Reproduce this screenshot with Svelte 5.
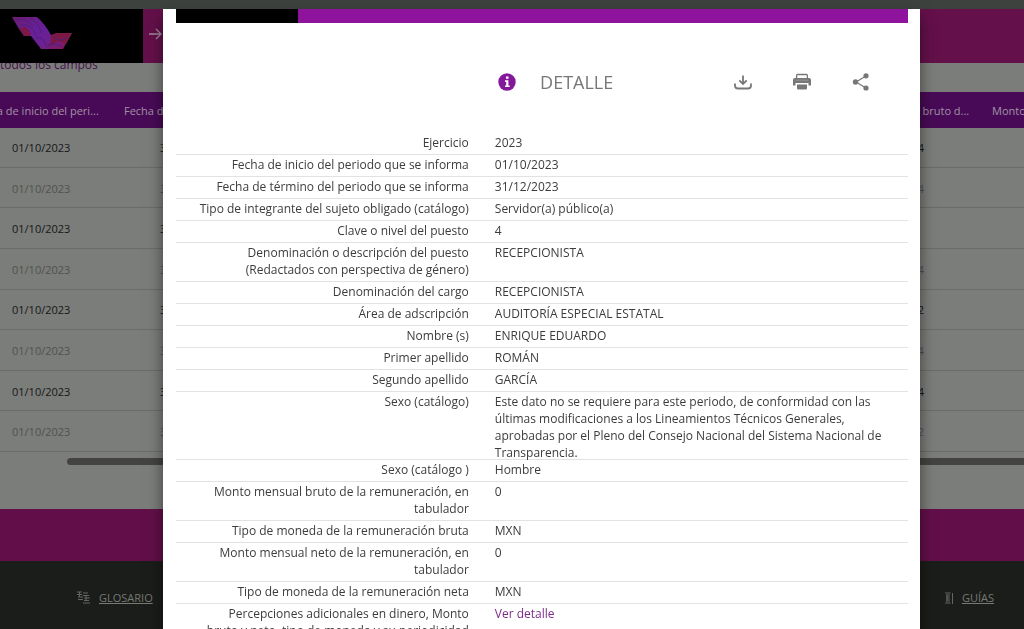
<script>
  const dates = [
    { last: '4', dim: false },
    { last: '4', dim: true },
    { last: '', dim: false },
    { last: '4', dim: true },
    { last: '2', dim: false },
    { last: '4', dim: true },
    { last: '4', dim: false },
    { last: '2', dim: true }
  ];

  const fields = [
    ['Ejercicio', '2023'],
    ['Fecha de inicio del periodo que se informa', '01/10/2023'],
    ['Fecha de término del periodo que se informa', '31/12/2023'],
    ['Tipo de integrante del sujeto obligado (catálogo)', 'Servidor(a) público(a)'],
    ['Clave o nivel del puesto', '4'],
    ['Denominación o descripción del puesto (Redactados con perspectiva de género)', 'RECEPCIONISTA'],
    ['Denominación del cargo', 'RECEPCIONISTA'],
    ['Área de adscripción', 'AUDITORÍA ESPECIAL ESTATAL'],
    ['Nombre (s)', 'ENRIQUE EDUARDO'],
    ['Primer apellido', 'ROMÁN'],
    ['Segundo apellido', 'GARCÍA'],
    ['Sexo (catálogo)', 'Este dato no se requiere para este periodo, de conformidad con las últimas modificaciones a los Lineamientos Técnicos Generales, aprobadas por el Pleno del Consejo Nacional del Sistema Nacional de Transparencia.'],
    ['Sexo (catálogo )', 'Hombre'],
    ['Monto mensual bruto de la remuneración, en tabulador', '0'],
    ['Tipo de moneda de la remuneración bruta', 'MXN'],
    ['Monto mensual neto de la remuneración, en tabulador', '0'],
    ['Tipo de moneda de la remuneración neta', 'MXN'],
    ['Percepciones adicionales en dinero, Monto bruto y neto, tipo de moneda y su periodicidad', 'Ver detalle', true]
  ];
</script>

<div class="page">
  <header class="site-header">
    <div class="brand">
      <svg width="64" height="36" viewBox="0 0 64 36" aria-hidden="true">
        <defs>
          <linearGradient id="ribbon" x1="0" y1="0" x2="1" y2="1">
            <stop offset="0" stop-color="#6e1c72" />
            <stop offset="0.4" stop-color="#66209a" />
            <stop offset="0.7" stop-color="#6c2190" />
            <stop offset="1" stop-color="#8c1746" />
          </linearGradient>
        </defs>
        <path d="M1 1h25Q34 8 40 19l6-2h15L52 33H30L20 20h-7L8 13Z" fill="url(#ribbon)" />
        <path d="M8 12l7-1 5 6-1 3h-6Z" fill="#7d1849" />
        <path d="M40 19l6-2h15l-6 11-8-3-10 6Q41 26 40 19Z" fill="#7c1844" />
        <path d="M5 4c8-2 14 2 17 7M10 9c7-1 12 3 15 10M19 3c6 2 10 7 11 14M25 22c5-2 8 2 10 7M43 21c5 4 8 4 13 0M35 31c5-4 10-4 16 0" fill="none" stroke="#501f7d" stroke-width="1" />
      </svg>
    </div>
    <svg class="arrow" width="13" height="12" viewBox="0 0 13 12" aria-hidden="true">
      <path d="M0 6h11.500M7 1l5 5-5 5" fill="none" stroke="#a18a9b" stroke-width="1.3" />
    </svg>
  </header>

  <main>
    <p class="all-fields">todos los campos</p>
    <table class="results">
      <colgroup><col class="c-date" /><col class="c-date" /><col /><col class="c-amount" /><col class="c-next" /></colgroup>
      <thead>
        <tr><th>Fecha de inicio del peri...</th><th>Fecha de término d...</th><th></th><th class="amount">Monto mensual bruto d...</th><th class="next">Monto</th></tr>
      </thead>
      <tbody>
        {#each dates as row}
          <tr class:dim={row.dim}><td>01/10/2023</td><td>31/12/2023</td><td></td><td class="num">{row.last}</td><td></td></tr>
        {/each}
      </tbody>
    </table>
    <div class="scrollbar"></div>
  </main>

  <div class="band"></div>
  <footer>
    <a href="#glosario">
      <svg width="13" height="13" viewBox="0 0 13 13" aria-hidden="true">
        <path d="M0 1h5M0 3.500h5M6 2h5M6 4.500h6M1 6h5M1 8.500h5M7 7h6M7 9.500h5M6 12h7M2.500 1v5M9 4v5" fill="none" stroke="#656663" />
      </svg>
      <span>GLOSARIO</span>
    </a>
    <a href="#guias">
      <svg width="8" height="12" viewBox="0 0 8 12" aria-hidden="true">
        <path d="M0 1h5.500M7.500 1v11M0 11h5.500M1 3h4M1 5h4M1 7h4M1 9h4M2 3v6" fill="none" stroke="#656663" />
      </svg>
      <span>GUÍAS</span>
    </a>
  </footer>
</div>

<div class="overlay">
  <section class="modal" role="dialog" aria-modal="true" aria-labelledby="detail-title">
    <div class="stripe"></div>
    <div class="title-row">
      <svg class="info" width="18" height="18" viewBox="0 0 18 18" aria-hidden="true">
        <circle cx="9" cy="9" r="8.700" fill="#84189a" />
        <path d="M8 3.500h2.500v2.300H8zM7 7.300h3.400v5.200h1.300v1.600H7v-1.600h1.200V8.900H7z" fill="#fff" />
      </svg>
      <h1 id="detail-title">DETALLE</h1>
      <div class="actions">
        <button aria-label="Descargar">
          <svg width="18" height="18" viewBox="0 0 18 18">
            <path d="M9 2.500v8.500M5.300 7.300L9 11l3.700-3.700M1 10.500v2q0 3 3 3h10q3 0 3-3v-2" fill="none" stroke="#777" stroke-width="1.800" />
          </svg>
        </button>
        <button aria-label="Imprimir">
          <svg width="18" height="18" viewBox="0 0 18 18">
            <path d="M3.600 5V2.500q0-1 1-1h8.800q1 0 1 1V5" fill="none" stroke="#777" stroke-width="1.300" />
            <path d="M2 5h14q2 0 2 2v5.500h-2.500V10h-13v2.500H0V7q0-2 2-2ZM4 11.500h10v3.700q0 1.300-1.300 1.300H5.300Q4 16.500 4 15.200Z" fill="#777" />
            <path d="M2.800 7.200h12.400" stroke="#999" stroke-width=".8" />
          </svg>
        </button>
        <button aria-label="Compartir">
          <svg width="18" height="18" viewBox="0 0 18 18">
            <path d="M14 3L4 9l10 6" fill="none" stroke="#777" stroke-width="1.200" />
            <g fill="#777"><circle cx="14" cy="2.800" r="2.600" /><circle cx="3.500" cy="9" r="2.700" /><circle cx="14" cy="15" r="2.600" /></g>
          </svg>
        </button>
      </div>
    </div>
    <dl>
      {#each fields as [label, value, link]}
        <div class="field">
          <dt>{label}</dt>
          <dd>{#if link}<a href="#detalle">{value}</a>{:else}{value}{/if}</dd>
        </div>
      {/each}
    </dl>
  </section>
</div>

<style>
  :global(body) {
    margin: 0;
    overflow: hidden;
    background: #1b1d1a;
    font-family: 'Open Sans', 'Noto Sans', sans-serif;
  }
  .page {
    height: 100vh;
    overflow: hidden;
    border-top: 9px solid #3e423e;
    box-sizing: border-box;
    background: #7b7d7a;
    font-size: 11px;
  }
  .site-header {
    display: flex;
    align-items: center;
    gap: 6px;
    height: 54px;
    background: #64104a;
  }
  .brand {
    display: flex;
    align-items: center;
    box-sizing: border-box;
    width: 143px;
    height: 100%;
    padding: 0 0 4px 11px;
    background: #000;
  }
  .arrow {
    margin-bottom: 5px;
  }
  main {
    height: 446px;
    overflow: hidden;
  }
  .all-fields {
    height: 29px;
    margin: 0;
    font-size: 12px;
    line-height: 4px;
    color: #45124d;
  }
  .results {
    table-layout: fixed;
    width: calc(100% + 136px);
    height: 360px;
    margin-left: -36px;
    border-collapse: collapse;
  }
  .c-date {
    width: 148px;
  }
  .c-amount {
    width: 150px;
  }
  .c-next {
    width: 140px;
  }
  th {
    height: 36px;
    padding: 0 0 0 12px;
    background: #480a56;
    color: #a193a5;
    font-weight: 400;
    text-align: left;
    white-space: nowrap;
  }
  th:first-child {
    padding-left: 9px;
  }
  th.amount {
    padding-left: 5px;
  }
  th.next {
    padding-left: 8px;
  }
  td {
    padding: 1px 0 0 48px;
    border-bottom: 1px solid #6a6c69;
    color: #161716;
  }
  td.num {
    padding: 1px 60px 0 0;
    text-align: right;
  }
  .dim td {
    color: #50524f;
  }
  .scrollbar {
    height: 7px;
    margin: 6px 0 0 67px;
    border-radius: 4px 0 0 4px;
    background: #434442;
  }
  .band {
    height: 52px;
    background: #620f49;
  }
  footer {
    display: flex;
    justify-content: space-between;
    align-items: center;
    height: 73px;
    padding: 0 30px 2px 77px;
    background: #1b1d1a;
  }
  footer a {
    display: flex;
    align-items: center;
    gap: 9px;
    color: #777975;
    font-size: 11px;
    text-decoration: none;
  }
  footer span {
    text-decoration: underline;
  }
  .overlay {
    position: fixed;
    inset: 0;
    display: flex;
    padding: 9px 104px 0 163px;
    overflow: hidden;
  }
  .modal {
    flex: 1;
    align-self: flex-start;
    min-height: 100vh;
    padding: 0 12px 0 13px;
    background: #fff;
    box-shadow: 0 8px 14px rgb(0 0 0 / 50%);
  }
  .stripe {
    height: 14px;
    background: linear-gradient(to right, #000 122px, #8e149e 122px);
  }
  .title-row {
    display: flex;
    align-items: center;
    height: 110px;
    padding: 8px 38px 0 44%;
    box-sizing: border-box;
  }
  .title-row h1 {
    margin: 0 0 0 24px;
    color: #777;
    font-size: 18px;
    font-weight: 400;
    line-height: 24px;
  }
  .actions {
    display: flex;
    gap: 41px;
    margin-left: auto;
  }
  button {
    display: flex;
    padding: 0;
    border: 0;
    background: none;
    cursor: pointer;
  }
  dl {
    margin: 0;
    color: #3c3c3c;
    font-size: 12px;
    line-height: 17px;
  }
  .field {
    display: grid;
    grid-template-columns: 40% 1fr;
    column-gap: 26px;
    border-bottom: 1px solid #e2e2e2;
  }
  dt {
    padding: 1px 0 3px 20px;
    text-align: right;
  }
  dd {
    margin: 0 24px -2px 0;
    padding-top: 1px;
  }
  dd a {
    color: #7d2a8a;
    text-decoration: none;
  }
</style>
